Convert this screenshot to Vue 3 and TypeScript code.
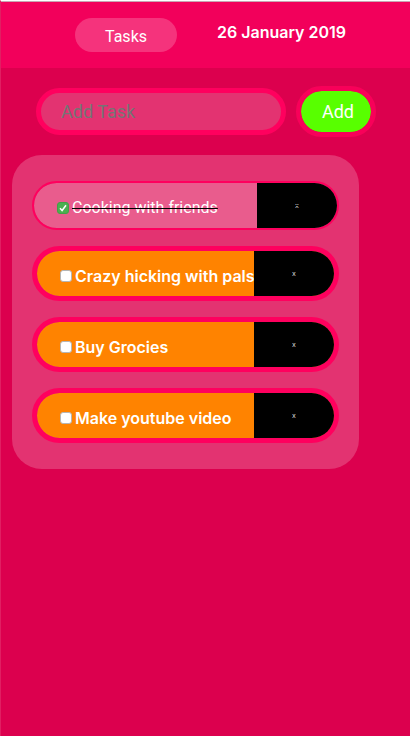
<script setup lang="ts">
import { ref } from 'vue'

interface Task {
  id: number
  title: string
  done: boolean
}

const tasks = ref<Task[]>([
  { id: 1, title: 'Cooking with friends', done: true },
  { id: 2, title: 'Crazy hicking with pals', done: false },
  { id: 3, title: 'Buy Grocies', done: false },
  { id: 4, title: 'Make youtube video', done: false },
])
const draft = ref('')
let nextId = 5

function addTask(): void {
  const title = draft.value.trim()
  if (!title) return
  tasks.value.push({ id: nextId++, title, done: false })
  draft.value = ''
}

function removeTask(id: number): void {
  tasks.value = tasks.value.filter((task) => task.id !== id)
}
</script>

<template>
  <div class="app">
    <header class="header">
      <h1 class="title">Tasks</h1>
      <time class="date" datetime="2019-01-26">26 January 2019</time>
    </header>
    <main>
      <form class="form" @submit.prevent="addTask">
        <input v-model="draft" class="field" type="text" placeholder="Add Task" aria-label="Add Task" />
        <button class="add" type="submit">Add</button>
      </form>
      <ul class="list">
        <li v-for="task in tasks" :key="task.id" class="task" :class="{ done: task.done }">
          <label class="label">
            <input v-model="task.done" class="check" type="checkbox" />
            <span class="name">{{ task.title }}</span>
          </label>
          <button class="remove" type="button" @click="removeTask(task.id)">x</button>
        </li>
      </ul>
    </main>
  </div>
</template>

<style>
body {
  background: #dc004e;
}
</style>

<style scoped>
.app {
  box-sizing: border-box;
  min-height: 100vh;
  border-top: 1px solid #fff;
  border-left: 1px solid #e11f62;
  background: #dc004e;
  color: #fff;
  font-family: Inter, "Liberation Sans", sans-serif;
  font-size: 16px;
  line-height: 20px;
}

.header {
  display: flex;
  align-items: flex-start;
  gap: 40px;
  box-sizing: border-box;
  height: 67px;
  padding: 16px 20px 0 74px;
  border-top: 1px solid #c9a5b3;
  background: #f2005b;
}

.title {
  margin: 0;
  padding: 9px 30px 5px;
  border-radius: 17px;
  background: #f5337c;
  font-family: Roboto, sans-serif;
  font-size: 16px;
  font-weight: 400;
}

.date {
  padding-top: 4px;
  font-weight: 600;
  white-space: nowrap;
}

.form {
  display: flex;
  align-items: center;
  gap: 10px;
  padding: 18px 34px 18px 35px;
}

.field,
.add {
  box-sizing: border-box;
  margin: 0;
  border: 5px solid #ff005e;
  font-family: Roboto, sans-serif;
  font-size: 18px;
  font-weight: 400;
}

.field {
  flex: 1;
  min-width: 0;
  height: 47px;
  padding: 0 20px;
  border-radius: 24px;
  outline: none;
  background: #e33371;
  color: #fff;
}

.field::placeholder {
  color: #757575;
  opacity: 1;
}

.add {
  width: 80px;
  height: 51px;
  padding: 0 0 0 4px;
  border-color: #f80059;
  border-radius: 26px;
  background: #58ff00;
  background-clip: padding-box;
  color: #fff;
}

.list {
  display: flex;
  flex-direction: column;
  gap: 16px;
  margin: 0 51px 0 11px;
  padding: 26px 20px;
  border-radius: 30px;
  background: #e33371;
  list-style: none;
}

.task {
  display: flex;
  height: 45px;
  overflow: hidden;
  border: 5px solid #ff005e;
  border-radius: 28px;
  background: #ff8300;
  background-clip: padding-box;
  font-weight: 600;
}

.task.done {
  border-width: 2px;
  background-color: #e95c8d;
  font-family: Roboto, sans-serif;
  font-weight: 400;
}

.label {
  display: flex;
  flex: 1;
  align-items: center;
  gap: 3px;
  min-width: 0;
  padding: 5px 0 0 23px;
  white-space: nowrap;
}

.check {
  flex: none;
  box-sizing: border-box;
  width: 12px;
  height: 12px;
  margin: 0;
  appearance: none;
  border: 1px solid #b5b5b5;
  border-radius: 3px;
  background: #fff;
}

.check:checked {
  border-color: #43a047;
  background: #4caf50 url("data:image/svg+xml,%3Csvg xmlns='http://www.w3.org/2000/svg' viewBox='0 0 10 10'%3E%3Cpath d='M2 5.3 4.1 7.5 8 2.3' fill='none' stroke='white' stroke-width='1.5'/%3E%3C/svg%3E") center / 10px 10px no-repeat;
}

.done .name {
  text-decoration: line-through 1px #000;
}

.remove {
  flex: none;
  width: 80px;
  margin: 0;
  padding: 0;
  border: 0;
  background: #000;
  color: #ddd;
  font-family: Inter, sans-serif;
  font-size: 7px;
}

.done .remove {
  text-decoration: line-through 1px #000;
}
</style>
